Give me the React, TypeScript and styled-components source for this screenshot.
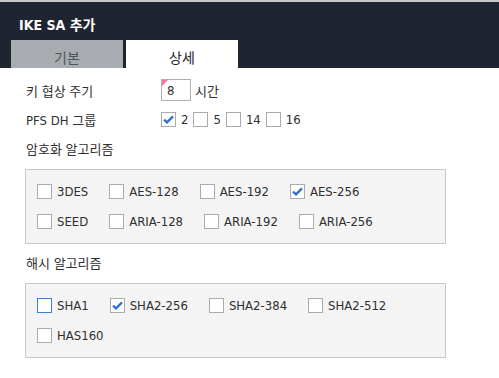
import React from "react"
import styled, { createGlobalStyle } from "styled-components"

const GlobalStyle = createGlobalStyle`
  html, body {
    margin: 0;
    padding: 0;
    background: #ffffff;
  }
  body {
    font-family: "DejaVu Sans Condensed", "DejaVu Sans", "Noto Sans CJK KR", sans-serif;
    font-stretch: condensed;
    font-size: 13px;
    color: #2f2f2f;
  }
`

const cipherRows = [
  [
    { label: "3DES", checked: false },
    { label: "AES-128", checked: false },
    { label: "AES-192", checked: false },
    { label: "AES-256", checked: true },
  ],
  [
    { label: "SEED", checked: false },
    { label: "ARIA-128", checked: false },
    { label: "ARIA-192", checked: false },
    { label: "ARIA-256", checked: false },
  ],
]

const hashRows = [
  [
    { label: "SHA1", checked: false, focused: true },
    { label: "SHA2-256", checked: true },
    { label: "SHA2-384", checked: false },
    { label: "SHA2-512", checked: false },
  ],
  [{ label: "HAS160", checked: false }],
]

const dhGroups = [
  { label: "2", checked: true },
  { label: "5", checked: false },
  { label: "14", checked: false },
  { label: "16", checked: false },
]

type Item = { label: string; checked: boolean; focused?: boolean }
type CheckProps = { checked?: boolean; focused?: boolean }

const CheckBox = ({ checked, focused }: CheckProps) => (
  <Box $focused={focused}>
    {checked && (
      <svg width="11" height="9" viewBox="0 0 11 9">
        <path d="M1 4.6 L4 7.4 L10 1.4" fill="none" stroke="#2a72c8" strokeWidth="2.2" />
      </svg>
    )}
  </Box>
)

const Panel = ({ rows }: { rows: Item[][] }) => (
  <OptionPanel>
    {rows.map((row, i) => (
      <OptionRow key={i}>
        {row.map(o => (
          <Option key={o.label}>
            <CheckBox checked={o.checked} focused={o.focused} />
            <OptionText>{o.label}</OptionText>
          </Option>
        ))}
      </OptionRow>
    ))}
  </OptionPanel>
)

export default function App() {
  return (
    <Page>
      <GlobalStyle />
      <Header>
        <Title>IKE SA 추가</Title>
        <Tabs>
          <Tab>기본</Tab>
          <Tab $active>상세</Tab>
        </Tabs>
      </Header>
      <Content>
        <FormRow>
          <Label>키 협상 주기</Label>
          <NumberInput>
            <Marker />8
          </NumberInput>
          <Unit>시간</Unit>
        </FormRow>
        <FormRow $top={7}>
          <Label>PFS DH 그룹</Label>
          {dhGroups.map(g => (
            <InlineOption key={g.label}>
              <CheckBox checked={g.checked} />
              <OptionText>{g.label}</OptionText>
            </InlineOption>
          ))}
        </FormRow>
        <SectionTitle>암호화 알고리즘</SectionTitle>
        <Panel rows={cipherRows} />
        <SectionTitle>해시 알고리즘</SectionTitle>
        <Panel rows={hashRows} />
      </Content>
    </Page>
  )
}

const Page = styled.div`
  width: 499px;
  height: 378px;
  overflow: hidden;
  border-top: 2px solid #c9c9c9;
  box-sizing: border-box;
`
const Header = styled.div`
  background: #1f2530;
  height: 66px;
  display: flex;
  flex-direction: column;
  justify-content: space-between;
`
const Title = styled.div`
  color: #ffffff;
  font-weight: bold;
  font-size: 14px;
  padding: 12px 0 0 19px;
`
const Tabs = styled.div`
  display: flex;
  gap: 3px;
  padding-left: 11px;
`
const Tab = styled.div<{ $active?: boolean }>`
  width: 112px;
  height: 28px;
  display: flex;
  align-items: center;
  justify-content: center;
  padding-top: 5px;
  box-sizing: border-box;
  font-size: 14px;
  background: ${p => (p.$active ? "#ffffff" : "#a8abaf")};
  color: ${p => (p.$active ? "#1f2530" : "#4f545b")};
`
const Content = styled.div`
  padding: 11px 0 0 25px;
`
const FormRow = styled.div<{ $top?: number }>`
  display: flex;
  align-items: center;
  height: 22px;
  margin-top: ${p => p.$top ?? 0}px;
`
const Label = styled.div`
  width: 135px;
  padding-left: 1px;
  font-size: 13px;
`
const NumberInput = styled.div`
  position: relative;
  width: 30px;
  height: 22px;
  box-sizing: border-box;
  border: 1px solid #b0b0b0;
  padding-left: 5px;
  display: flex;
  align-items: center;
`
const Marker = styled.span`
  position: absolute;
  left: 0;
  top: 0;
  width: 0;
  height: 0;
  border-top: 6px solid #f0789a;
  border-right: 6px solid transparent;
`
const Unit = styled.span`
  margin-left: 4px;
  font-size: 13px;
`
const InlineOption = styled.label`
  display: flex;
  align-items: center;
  gap: 5px;
  margin-right: 5px;
`
const Box = styled.span<{ $focused?: boolean }>`
  width: 15px;
  height: 15px;
  box-sizing: border-box;
  border: 1px solid ${p => (p.$focused ? "#3b7fd6" : "#ababab")};
  background: #ffffff;
  display: inline-flex;
  align-items: center;
  justify-content: center;
  flex-shrink: 0;
`
const OptionText = styled.span`
  line-height: 15px;
`
const SectionTitle = styled.div`
  font-size: 13px;
  height: 20px;
  line-height: 20px;
  margin-top: 10px;
  padding-left: 1px;
`
const OptionPanel = styled.div`
  width: 421px;
  box-sizing: border-box;
  margin-top: 9px;
  border: 1px solid #c8c8c8;
  background: #f4f4f4;
  padding: 14px 11px;
  display: flex;
  flex-direction: column;
  gap: 15px;
`
const OptionRow = styled.div`
  display: flex;
  align-items: center;
`
const Option = styled.label`
  display: flex;
  align-items: center;
  gap: 5px;
  margin-right: 21px;
`
